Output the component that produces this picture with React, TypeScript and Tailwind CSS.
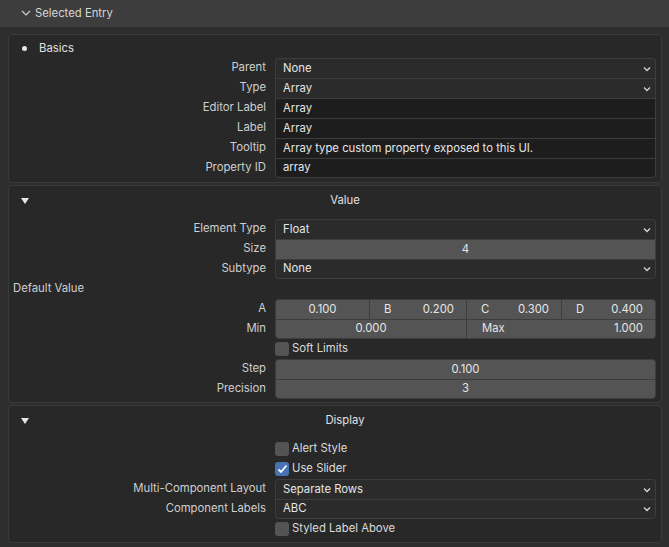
import React from 'react';

const Chevron = () => (
  <svg width="8" height="6" viewBox="0 0 8 6" className="shrink-0">
    <polyline points="1,1.5 4,4.5 7,1.5" fill="none" stroke="#d4d4d4" strokeWidth="1.3" />
  </svg>
);

const Row: React.FC<{ label?: string; children: React.ReactNode }> = ({ label, children }) => (
  <div className="flex h-5 items-center">
    <div className="w-[257px] shrink-0 text-right text-[#cfcfcf]">{label}</div>
    <div className="ml-[9px] mr-[5px] flex h-full flex-1 items-center">{children}</div>
  </div>
);

const Check: React.FC<{ label: string; checked?: boolean }> = ({ label, checked }) => (
  <Row>
    <div className="flex items-center gap-[3px]">
      <div
        className={`flex h-[14px] w-[14px] items-center justify-center rounded-[3px] ${
          checked ? 'bg-[#4772b3]' : 'bg-[#545454]'
        }`}
      >
        {checked && (
          <svg width="11" height="10" viewBox="0 0 11 10">
            <polyline points="1.5,5.5 4,8 9.5,1.5" fill="none" stroke="#fff" strokeWidth="1.8" />
          </svg>
        )}
      </div>
      <span className="text-[#dcdcdc]">{label}</span>
    </div>
  </Row>
);

const PanelHeader: React.FC<{ title: string }> = ({ title }) => (
  <div className="relative flex h-[30px] items-center">
    <svg width="10" height="8" viewBox="0 0 10 8" className="absolute left-[11px] top-[11px]">
      <polygon points="1,1 9,1 5,7" fill="#e6e6e6" />
    </svg>
    <div className="flex-1 pl-[20px] text-center text-[#e0e0e0]">{title}</div>
  </div>
);

export default function App() {
  const box = 'border-x border-[#3d3d3d]';
  return (
    <div
      className="h-[547px] w-[669px] overflow-hidden bg-[#2e2e2e] text-[11.3px] leading-none"
      style={{ fontFamily: 'Inter, "Noto Sans", sans-serif' }}
    >
      <div className="flex h-[27px] items-center bg-[#3d3d3d] pl-[21px] text-[#d6d6d6]">
        <svg width="10" height="7" viewBox="0 0 10 7" className="mr-[4px]">
          <polyline points="1,1 5,5 9,1" fill="none" stroke="#cfcfcf" strokeWidth="1.2" />
        </svg>
        Selected Entry
      </div>

      <div className="flex flex-col gap-[2px] pl-[8px] pr-[7px] pt-[7px]">
        {/* Basics */}
        <div className="rounded-[4px] border border-[#3a3a3a] bg-[#282828] pb-[4px]">
          <div className="flex h-[23px] items-center pt-[4px]">
            <div className="ml-[13px] h-[5px] w-[5px] rounded-full bg-[#e6e6e6]" />
            <span className="ml-[12px] text-[#e0e0e0]">Basics</span>
          </div>
          <Row label="Parent">
            <div className={`flex h-full flex-1 items-center justify-between rounded-t-[4px] border-t ${box} bg-[#2b2b2b] pl-[7px] pr-[4px] text-[#e6e6e6]`}>
              None <Chevron />
            </div>
          </Row>
          <Row label="Type">
            <div className={`flex h-full flex-1 items-center justify-between border-t ${box} bg-[#2b2b2b] pl-[7px] pr-[4px] text-[#e6e6e6]`}>
              Array <Chevron />
            </div>
          </Row>
          {['Editor Label', 'Label', 'Tooltip', 'Property ID'].map((l, i) => {
            const v = ['Array', 'Array', 'Array type custom property exposed to this UI.', 'array'][i];
            return (
              <Row key={l} label={l}>
                <div
                  className={`flex h-full flex-1 items-center border-t ${box} bg-[#1d1d1d] pl-[7px] text-[#e6e6e6] ${
                    i === 3 ? 'rounded-b-[4px] border-b' : ''
                  }`}
                >
                  {v}
                </div>
              </Row>
            );
          })}
        </div>

        {/* Value */}
        <div className="rounded-[4px] border border-[#3a3a3a] bg-[#282828] pb-[3px]">
          <PanelHeader title="Value" />
          <div className="mt-[3px]" />
          <Row label="Element Type">
            <div className={`flex h-full flex-1 items-center justify-between rounded-t-[4px] border-t ${box} bg-[#2b2b2b] pl-[7px] pr-[4px] text-[#e6e6e6]`}>
              Float <Chevron />
            </div>
          </Row>
          <Row label="Size">
            <div className={`flex h-full flex-1 items-center justify-center border-t ${box} bg-[#545454] text-[#e6e6e6]`}>4</div>
          </Row>
          <Row label="Subtype">
            <div className={`flex h-full flex-1 items-center justify-between rounded-b-[4px] border-y ${box} bg-[#2b2b2b] pl-[7px] pr-[4px] text-[#e6e6e6]`}>
              None <Chevron />
            </div>
          </Row>
          <div className="flex h-5 items-center pl-[4px] text-[#cfcfcf]">Default Value</div>
          <Row label="A">
            <div className="flex h-full flex-1 rounded-t-[4px] border-x border-t border-[#3d3d3d] bg-[#545454] text-[#e6e6e6]">
              <div className="flex w-[94px] items-center justify-center border-r border-[#3d3d3d]">0.100</div>
              <div className="flex w-[97px] items-center justify-between border-r border-[#3d3d3d] pl-[14px] pr-[12px]">
                <span>B</span>
                <span>0.200</span>
              </div>
              <div className="flex w-[95px] items-center justify-between border-r border-[#3d3d3d] pl-[14px] pr-[12px]">
                <span>C</span>
                <span>0.300</span>
              </div>
              <div className="flex flex-1 items-center justify-between pl-[14px] pr-[12px]">
                <span>D</span>
                <span>0.400</span>
              </div>
            </div>
          </Row>
          <Row label="Min">
            <div className="flex h-full flex-1 rounded-b-[4px] border border-[#3d3d3d] bg-[#545454] text-[#e6e6e6]">
              <div className="flex w-[191px] items-center justify-center border-r border-[#3d3d3d]">0.000</div>
              <div className="flex flex-1 items-center justify-between pl-[15px] pr-[12px]">
                <span>Max</span>
                <span>1.000</span>
              </div>
            </div>
          </Row>
          <Check label="Soft Limits" />
          <Row label="Step">
            <div className="flex h-full flex-1 items-center justify-center rounded-t-[4px] border-x border-t border-[#3d3d3d] bg-[#545454] text-[#e6e6e6]">
              0.100
            </div>
          </Row>
          <Row label="Precision">
            <div className="flex h-full flex-1 items-center justify-center rounded-b-[4px] border border-[#3d3d3d] bg-[#545454] text-[#e6e6e6]">
              3
            </div>
          </Row>
        </div>

        {/* Display */}
        <div className="rounded-[4px] border border-[#3a3a3a] bg-[#282828] pb-[3px]">
          <PanelHeader title="Display" />
          <div className="mt-[3px]" />
          <Check label="Alert Style" />
          <Check label="Use Slider" checked />
          <Row label="Multi-Component Layout">
            <div className={`flex h-full flex-1 items-center justify-between rounded-t-[4px] border-t ${box} bg-[#2b2b2b] pl-[7px] pr-[4px] text-[#e6e6e6]`}>
              Separate Rows <Chevron />
            </div>
          </Row>
          <Row label="Component Labels">
            <div className={`flex h-full flex-1 items-center justify-between rounded-b-[4px] border-y ${box} bg-[#2b2b2b] pl-[7px] pr-[4px] text-[#e6e6e6]`}>
              ABC <Chevron />
            </div>
          </Row>
          <Check label="Styled Label Above" />
        </div>
      </div>
    </div>
  );
}
